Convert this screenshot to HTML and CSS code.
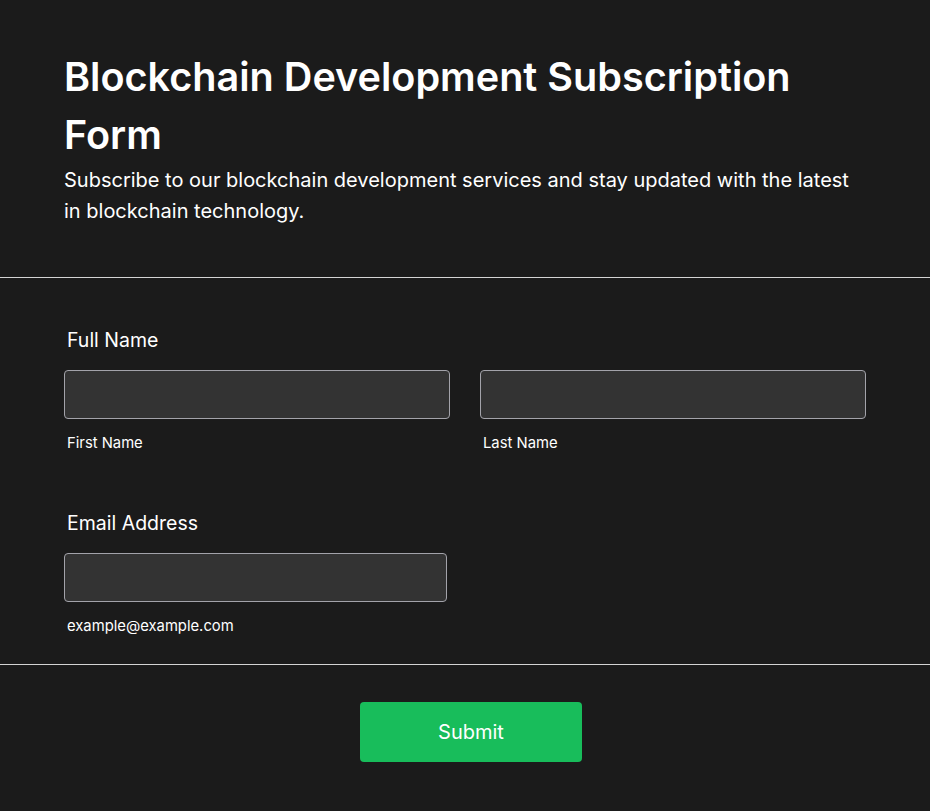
FILE: index.html
```html
<!DOCTYPE html>
<html>
<head>
<meta charset="utf-8">
<link rel="stylesheet" href="styles.css">
</head>
<body>
<div class="page">
  <header class="head">
    <h1 class="title">Blockchain Development Subscription Form</h1>
    <p class="sub">Subscribe to our blockchain development services and stay updated with the latest in blockchain technology.</p>
  </header>
  <hr class="rule">
  <form class="form">
    <div class="field">
      <div class="label">Full Name</div>
      <div class="row">
        <div class="col">
          <input class="input" type="text">
          <div class="hint">First Name</div>
        </div>
        <div class="col">
          <input class="input" type="text">
          <div class="hint">Last Name</div>
        </div>
      </div>
    </div>
    <div class="field email">
      <div class="label">Email Address</div>
      <div class="col half">
        <input class="input" type="email">
        <div class="hint">example@example.com</div>
      </div>
    </div>
  </form>
  <hr class="rule">
  <div class="actions">
    <button class="submit" type="button">Submit</button>
  </div>
</div>
</body>
</html>
```

FILE: styles.css
```css
* { box-sizing: border-box; }
html, body { margin: 0; padding: 0; }
body {
  background: #1b1b1b;
  color: #ffffff;
  font-family: Inter, "Noto Sans", sans-serif;
  height: 811px;
  overflow: hidden;
}
.page { width: 930px; }
.head { padding: 48px 64px 50px 64px; }
.title {
  margin: 0;
  font-size: 39.6px;
  line-height: 58px;
  font-weight: 600;
  max-width: 780px;
}
.sub {
  margin: 1px 0 0 0;
  font-size: 20px;
  line-height: 31px;
  font-weight: 400;
  max-width: 802px;
}
.rule {
  margin: 0;
  border: 0;
  border-top: 1px solid #d4d4d4;
  height: 0;
}
.form { padding: 50px 64px 29px 64px; }
.field { display: flex; flex-direction: column; }
.email { margin-top: 59px; }
.label {
  font-size: 19.5px;
  line-height: 24px;
  padding-left: 3px;
  margin-bottom: 18px;
  font-weight: 400;
}
.row { display: flex; gap: 30px; }
.col { flex: 1; display: flex; flex-direction: column; }
.half { width: 383px; flex: none; }
.input {
  height: 49px;
  width: 100%;
  background: #333333;
  border: 1px solid #a3a3aa;
  border-radius: 4px;
  outline: none;
}
.hint {
  font-size: 14.8px;
  line-height: 18px;
  padding-left: 3px;
  margin-top: 15px;
}
.actions {
  display: flex;
  justify-content: center;
  padding-top: 37px;
}
.submit {
  width: 222px;
  height: 60px;
  background: #18bd5b;
  color: #ffffff;
  border: 0;
  border-radius: 4px;
  font-family: Inter, "Noto Sans", sans-serif;
  font-size: 20px;
  font-weight: 400;
  margin-left: 12px;
}
```
